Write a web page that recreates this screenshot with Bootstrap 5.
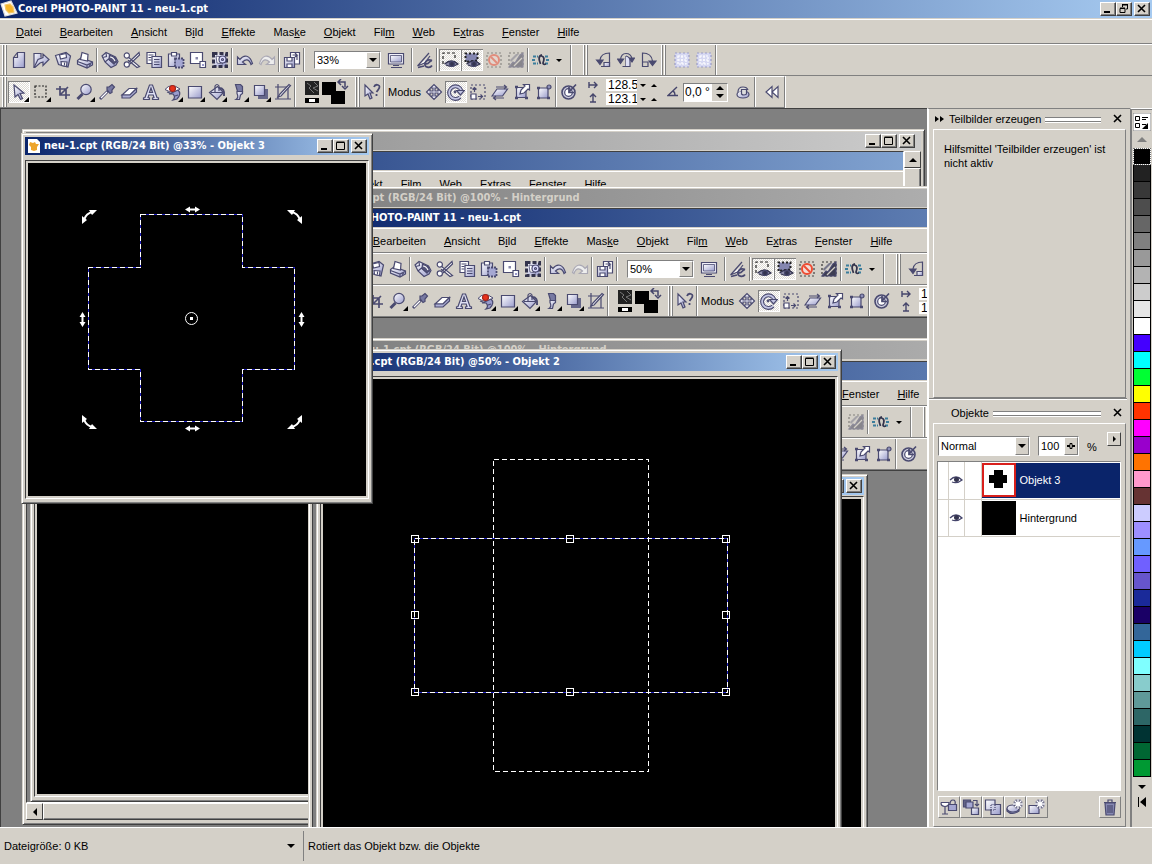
<!DOCTYPE html>
<html lang="de">
<head>
<meta charset="utf-8">
<meta name="viewport" content="width=device-width, initial-scale=1">
<title>Corel PHOTO-PAINT 11 - neu-1.cpt</title>
<link href="https://cdn.jsdelivr.net/npm/bootstrap@5.3.0/dist/css/bootstrap.min.css" rel="stylesheet">
<style>
:root{--face:#d4d0c8;--shade:#808080;--dark:#404040;--ink:#4a4a70;--lav:#b9bbdc}
body{font:11px/14px "Liberation Sans",Arial,sans-serif;color:#000;background:var(--face)}
button,input,select{font:inherit;color:#000;border-radius:0}
button{padding:0;border:0;background:none}
svg{display:block;flex:none}
.title-strip{height:18px;margin-bottom:1px;background:linear-gradient(90deg,#0a246a,#a6caf0);color:#fff;font:bold 11px/18px "DejaVu Sans Condensed","DejaVu Sans",sans-serif;white-space:nowrap}
.title-off{background:linear-gradient(90deg,#808080,#c0c0c0);color:#d4d0c8}
.title-far{background:linear-gradient(90deg,#808080,#cccccc)}
.cap-btn{width:16px;height:14px;background:var(--face);border:1px solid;border-color:#fff var(--dark) var(--dark) #fff;box-shadow:inset -1px -1px 0 var(--shade);display:grid;place-items:center}
.cap-btn:last-child{margin:0 2px}
.menu-row{height:25px;border-top:1px solid #fff;border-bottom:1px solid var(--shade);padding-left:7px}
.menu-row a{color:#000;text-decoration:none;padding:0 9px}
.tool-row{height:32px;border-top:1px solid #fff;border-bottom:1px solid var(--shade);white-space:nowrap}
.tool-row.short-row{width:785px;border-right:1px solid var(--shade);box-shadow:1px 0 0 #fff}
.grip{width:8px;height:100%;flex:none;background:linear-gradient(90deg,transparent 2px,#fff 2px 3px,var(--shade) 3px 4px,transparent 4px 5px,#fff 5px 6px,var(--shade) 6px 7px,transparent 7px)}
.tb{width:22px;height:22px;flex:none;display:grid;place-items:center;position:relative}
.tb.on{background:repeating-conic-gradient(#fff 0 25%,#dedbd5 0 50%) 0 0/2px 2px;box-shadow:inset 1px 1px 0 var(--shade),inset -1px -1px 0 #fff}
.tb.fly::after{content:"";position:absolute;right:1px;bottom:1px;border-bottom:5px solid #000;border-left:5px solid transparent}
.tb.faded{opacity:.5}.has-mask .tb.faded{opacity:1}
.rule{width:3px;height:24px;flex:none;border-left:1px solid var(--shade);box-shadow:inset 1px 0 0 #fff}
.rule.tall{height:30px}
.ic{width:18px;height:18px;fill:none;stroke:var(--ink);stroke-width:1.2}
.doc-ic{width:14px;height:16px;margin:0 3px 0 2px}
.field{border:1px solid;border-color:var(--shade) #fff #fff var(--shade);background:#fff}
.pick{appearance:none;background:#fff;border:0;padding:0 0 0 2px;flex:1;min-width:0;outline:0}
.drop{width:14px;background:var(--face);border:1px solid;border-color:#fff var(--shade) var(--shade) #fff;display:grid;place-items:center}
.down,.up,.leftw,.rightw{width:0;height:0;border:4px solid transparent}
.down{border-top-color:#000;border-bottom:0}.up{border-bottom-color:#000;border-top:0}
.leftw{border-right-color:#000;border-left:0}.rightw{border-left-color:#000;border-right:0}
.sm{border-width:3px}.down.sm{border-bottom:0}.up.sm{border-top:0}.rightw.sm{border-right:0}
.zoom-box{width:67px;height:18px}
.pos-stack{gap:2px}
.pos-box{width:53px;height:12px;background:#fff}
.pos-box input{width:31px;border:0;padding:0 0 0 2px;background:#fff;font-size:12px;line-height:12px;height:12px}
.spin{background:var(--face);flex:1;display:flex;align-items:center;justify-content:space-around}
.ang-box{width:45px;height:19px}
.ang-box input{width:28px;border:0;padding:0 1px;font-size:12px}
.modus{padding:0 2px}
.work{background:var(--shade);border-top:1px solid var(--dark);border-left:1px solid var(--dark);min-height:0;min-width:0}
.win{position:absolute;background:var(--face);border:1px solid;border-color:var(--face) var(--dark) var(--dark) var(--face);box-shadow:inset 1px 1px 0 #fff,inset -1px -1px 0 var(--shade);padding:2px 3px 4px;display:flex;flex-direction:column}
.view{flex:1;min-height:0;overflow:hidden;border:1px solid;border-color:var(--dark) #fff #fff var(--dark);background:var(--shade);position:relative}
.view.paper{background:#000;border-width:1px;padding:0;outline:1px solid var(--face);outline-offset:-3px;box-shadow:inset 0 0 0 2px var(--face)}
.view.paper>svg{margin:2px 0 0 2px}
.copy-shell{width:1152px;background:var(--face)}
.copy-shell .tool-row:last-child{box-shadow:0 1px 0 var(--dark)}
/* windows on the MDI desktop, in stacking order */
.w-far{left:21px;top:20px;right:2px;bottom:2px}
.w-mid{left:307px;top:77px;right:-260px;bottom:-20px}
.w-inner{left:22px;top:129px;right:-40px;bottom:-10px}
.w-inner>.view{margin-top:1px}
.w-fore{left:-10px;top:112px;width:538px;bottom:-10px}
.w-obj2{left:315px;top:240px;width:526px;bottom:-8px;padding-top:3px}
.w-obj3{left:20px;top:24px;width:352px;height:371px;padding-top:3px}
.w-nest{left:3px;top:110px;right:-400px;bottom:0}
.sbar-y{width:17px}
.sbtn{width:17px;height:17px;background:var(--face);border:1px solid;border-color:#fff var(--dark) var(--dark) #fff;display:grid;place-items:center}
.thumb{flex:1;background:var(--face);border:1px solid;border-color:#fff var(--dark) var(--dark) #fff;box-shadow:inset -1px -1px 0 var(--shade)}
.dock{width:203px;border-left:2px solid #fff;border-top:1px solid var(--shade);padding-right:3px;min-height:0}
.dock-head{height:20px;padding:0 4px 0 6px}
.dock-lines{flex:1;height:5px;border:1px solid var(--shade);border-left:0;border-right:0;background:#fff;box-shadow:0 1px 0 #fff}
.dock-body{margin:0 1px 0 4px;border:1px solid;border-color:#fff var(--shade) var(--shade) #fff;min-height:0}
.dock-a{height:290px;border-bottom:1px solid var(--shade);box-shadow:0 1px 0 #fff}
.hint{padding:12px 0 0 10px}
.layers{margin:5px 4px 5px 3px}
.layers td{height:37px;border-right:1px solid #d4d0c8;border-bottom:1px solid #d4d0c8;padding:0;vertical-align:middle}
.layers td:last-child{border-right:0}
.layers tr.sel .nm{background:#0a246a;color:#fff;box-shadow:inset 0 -1px 0 #fff,inset 0 1px 0 #fff}
.thumbpic{width:34px;height:34px}
.raised{width:22px;height:22px;border:1px solid;border-color:#fff var(--shade) var(--shade) #fff;display:grid;place-items:center}
.pal{width:22px;border-top:1px solid #fff;border-left:1px solid var(--shade);box-shadow:inset 1px 1px 0 var(--shade)}
.pal-up{margin:6px 0}
.chip{width:18px;height:17px;border:1px solid #000;border-top:0}
.chip.cur{border:1px solid #fff;outline:1px dotted #777;outline-offset:-1px}
.foot{height:37px;border-top:1px solid #fff}
.foot-l{width:304px;border-right:1px solid var(--shade);height:30px}
</style>
</head>
<body class="vh-100 d-flex flex-column overflow-hidden">
<svg width="0" height="0" class="position-absolute" aria-hidden="true">
<defs><linearGradient id="g" x1="0" y1="0" x2="1" y2="1"><stop offset="0" stop-color="#fff"/><stop offset="1" stop-color="#9a9ccc"/></linearGradient></defs>
<symbol id="new" viewBox="0 0 18 18"><path d="M3.500 6.500 7.500 1.500H14.500V16.500H3.500ZM3.500 6.500H7.500V1.500" fill="url(#g)"/></symbol>
<symbol id="open" viewBox="0 0 18 18"><path d="M2 16V2.500l7 0 0 4" fill="url(#g)"/><path d="M2 16.500 6 8.500l5-2V3l6 5.500-6 6v-3.500L8 12 3 16.500Z" fill="url(#g)"/></symbol>
<symbol id="save" viewBox="0 0 18 18"><path d="M1.500 4.500 12 1.500 16.500 5 14 16 4.500 13.500Z" fill="url(#g)"/><path d="M5.500 4 12 2.500 12.500 6.500 6.500 8ZM7 10.500l6 .5-.5 4.500-5-1Z" fill="#fff"/><path d="M10.500 11.500v3"/></symbol>
<symbol id="print" viewBox="0 0 18 18"><path d="M1.500 9.500 5 7l11.500 4v3L11 17 1.500 13Z" fill="url(#g)"/><path d="M4.500 8.500 6 1.500 12 3.500 11.500 10Z" fill="#fff"/><path d="M1.500 10.500 11 14l5-2.500M11 14v3M13 14.500l2-1"/></symbol>
<symbol id="roll" viewBox="0 0 18 18"><path d="M1 5 5 1.500 14.500 6 17 10.500 15 14 10 16.500 4 11Z" fill="url(#g)"/><path d="M5 2 5.500 5.500 1.500 6.500M4 11 7.500 8l6 5.500"/><path d="M8.500 4l6 3 1 4-2.500 1.500-5-4Z" fill="#55557a"/><path d="M9 6q3 0 5 4" stroke="#fff"/></symbol>
<symbol id="cut" viewBox="0 0 18 18"><path d="M5 6 16.500 15.500 14 16.500 5 9M5 12 16 1.500 16.500 4 7 13" fill="#fff"/><circle cx="3.800" cy="4.500" r="2.600" fill="#fff"/><circle cx="3.800" cy="13.500" r="2.600" fill="#fff"/></symbol>
<symbol id="copy" viewBox="0 0 18 18"><path d="M2 1.500h8.500v11H2Z" fill="#fff"/><path d="M3.500 4h5M3.500 6.500h3M3.500 9h3"/><path d="M7 5.500h9.500V16.500H7Z" fill="url(#g)"/><path d="M9 8.500h5.500M9 11h5.500M9 13.500h5.500"/></symbol>
<symbol id="paste" viewBox="0 0 18 18"><path d="M1.500 3h11v12.500h-11Z" fill="url(#g)"/><path d="M4.500 1.500h5v3.500h-5Z" fill="#fff"/><path d="M8 7.500h8.500v9H8Z" fill="#a5a7d2" stroke-width="1.800" stroke-dasharray="2 1"/></symbol>
<symbol id="pnew" viewBox="0 0 18 18"><path d="M1.500 1.500h12v11h-12Z" fill="#fff"/><path d="M6.500 6h2.500v2.500H6.500Z" fill="#88a" stroke="none"/><path d="M11 10.500h5.500v6H11Z" fill="#fff"/><path d="M13 13h2v2h-2Z" fill="#99c" stroke="none"/></symbol>
<symbol id="cap" viewBox="0 0 18 18"><path d="M2.500 2.500h13v13h-13Z" fill="url(#g)" stroke="#33334c" stroke-dasharray="4 2" stroke-width="3"/><path d="M5 5l6 1-3 2 4 5-6-1Z" fill="#fff" stroke-width=".8"/><circle cx="11.500" cy="8.500" r="3.500" fill="#ddf"/><circle cx="11.500" cy="8.500" r="1"/></symbol>
<symbol id="undo" viewBox="0 0 18 18"><path d="M1.500 13.500V6l2.500 2.500C8 3 14 4 16.500 12.500l-1.500 1C13 7.500 9.500 8 6.500 11l3 2.500Z" fill="url(#g)"/></symbol>
<symbol id="redo" viewBox="0 0 18 18"><path d="M16.500 13.500V6l-2.500 2.500C10 3 4 4 1.500 12.500l1.500 1C5 7.500 8.500 8 11.500 11l-3 2.500Z" fill="#eee" stroke="#aaa8b4"/></symbol>
<symbol id="imp" viewBox="0 0 18 18"><path d="M7.500 1.500h9V13h-9Z" fill="#fff"/><path d="M1.500 6.500h10v10h-10Z" fill="url(#g)"/><path d="M4 7v3h5V7M4 16v-3h5v3" fill="#fff"/><path d="M9.500 4h4.500l-2-2m2 2-2 2M14 4v5"/></symbol>
<symbol id="mon" viewBox="0 0 18 18"><path d="M1.500 2.500h15v10.500h-15Z" fill="#f2f2fb"/><path d="M3.500 4.500h11v6.500h-11Z" fill="url(#g)" stroke-width=".8"/><path d="M6 14.500h6M4 16.500h11"/></symbol>
<symbol id="pen" viewBox="0 0 18 18"><path d="M1.500 15 13 2M1.500 15l7-3L14 5" fill="#fff"/><path d="M2 16.500 8 15M9 12.500c4 2 4-3 7-3-3-1-6-1-7 3s5 5 7 2" stroke-width="1.800"/></symbol>
<symbol id="eye1" viewBox="0 0 18 18"><path d="M2 13V2h12v7" stroke="#222" stroke-dasharray="3 2"/><path d="M3.500 13q7-6 13.500 0-6 4-12 1" fill="#8d8daa" stroke="#34344f"/><circle cx="11" cy="13" r="2.500" fill="#34344f"/></symbol>
<symbol id="eye2" viewBox="0 0 18 18"><path d="M2.500 11V2.500h12v7Z" fill="#8486b0" stroke="#222" stroke-dasharray="2 2" stroke-width="2"/><path d="M3.500 13q7-6 13.500 0-6 4-12 1" fill="#8d8daa" stroke="#34344f"/><circle cx="11" cy="13" r="2.500" fill="#34344f"/></symbol>
<symbol id="ban" viewBox="0 0 18 18"><path d="M2 2h14v14H2Z" stroke-dasharray="2 2" stroke="#444"/><circle cx="9" cy="9" r="5" fill="#f3dcd6" stroke="#ee4b32" stroke-width="2"/><path d="m6 6 6 6" stroke="#ee4b32" stroke-width="2"/></symbol>
<symbol id="inv" viewBox="0 0 18 18"><path d="M2 2h14v14H2Z" stroke-dasharray="2 2" stroke="#333"/><path d="M16 2v14H2L6 11l2 1 5-8Z" fill="#3d3d52"/><path d="M3 9 9 3h3L4 11Z" fill="#77778a" stroke="none"/><path d="M7 15 15 7" stroke="#d4d0c8"/></symbol>
<symbol id="snap" viewBox="0 0 18 18"><path d="M1 5.500h5M0 9h4M1 12.500h5M13 5.500h4M14 9h4M13 12.500h4" stroke="#3b7d9c" stroke-dasharray="3 1" stroke-width="1.800"/><path d="M10 4Q5 5 8.500 13M9.500 5q4 1 1.500 7 0 2 3 1" stroke="#33334c" stroke-width="1.800"/></symbol>
<symbol id="rotl" viewBox="0 0 18 18"><path d="M6 15.500h8.500V2Q6 2 5 9" /><path d="m1.500 9 3.500 4.500L8 9Z" fill="#4a4a70"/><path d="M9 11.500h5.500v4H9Z" fill="url(#g)"/></symbol>
<symbol id="rot2" viewBox="0 0 18 18"><path d="M3.500 9Q4 2.500 9 2.500T15 8M9 5v10.500H5.500"/><path d="m.5 8 3 4.500 3-4.500ZM12 7h5.500l-2.500 4Z" fill="#4a4a70"/><path d="M9 5q4 1 4 5v5.500H9" fill="#dfe0f4"/></symbol>
<symbol id="rotr" viewBox="0 0 18 18"><path d="M3.500 15.500V2q9 0 10 8M3.500 11h5.500v4.500H3.500Z" fill="none"/><path d="m10 10 3.500 4.500L17 10Z" fill="#4a4a70"/></symbol>
<symbol id="grp" viewBox="0 0 18 18"><path d="M2 2h14v14H2Z" fill="#d6d8f2" stroke="#9a9cc5" stroke-dasharray="2 2"/><path d="M5 9h8M9 5v8M5 5h8v8H5Z" stroke="#fff" stroke-dasharray="2 1"/></symbol>
<symbol id="sel" viewBox="0 0 18 18"><path d="M4 2 14 10 10 10.500 12.500 15.500 10.500 16.500 8 11.500 5 14Z" fill="url(#g)"/></symbol>
<symbol id="mask" viewBox="0 0 18 18"><path d="M3 3h11v11H3Z" stroke="#222" stroke-dasharray="2 1.500"/></symbol>
<symbol id="crop" viewBox="0 0 18 18"><path d="M2 6h10v10M6 3v9h10M6 12 14 4" stroke-width="1.700"/></symbol>
<symbol id="lens" viewBox="0 0 18 18"><path d="m6.500 11-5 5" stroke-width="3"/><circle cx="10" cy="6.500" r="5.200" fill="url(#g)"/></symbol>
<symbol id="drop" viewBox="0 0 18 18"><path d="M2 16 10 8" stroke-width="3"/><path d="M3 15 9 9" stroke="#fff"/><path d="m9 4 2 0 3-2.500 2.500 2.500-2.500 3 0 2.500-2 1-3-4Z" fill="#7779a2"/></symbol>
<symbol id="rub" viewBox="0 0 18 18"><path d="M2 12 9 5.500h7.500L10 12Z" fill="#fff"/><path d="M2 12h8l6.500-6.500V9L10 15H2Z" fill="#aeb0d6"/></symbol>
<symbol id="txt" viewBox="0 0 18 18"><path d="M1.500 16.500v-1.500l1.500-.5L7.500 2h3L15 14.500l1.500.5v1.500h-6V15l1.500-.5-.8-2.500H6.800L6 14.500l1.500.5v1.500ZM7.500 9.500h3L9 5Z" fill="#dfe0f4" fill-rule="evenodd"/></symbol>
<symbol id="red" viewBox="0 0 18 18"><path d="M1 6.500Q7-1 16 6q-6 6-15 .5" fill="#fff" stroke-width="1"/><path d="M5 11q5-2 9-4 4 4-1 9l-4 1q3-3 0-6Z" fill="#9a9ccc"/><path d="M6 10l-3-1m8 4 3-1"/><circle cx="8.500" cy="5.500" r="3" fill="#e8321c" stroke="#a3261b"/></symbol>
<symbol id="rect" viewBox="0 0 18 18"><path d="M2.500 3.500h13v11.500h-13Z" fill="url(#g)"/></symbol>
<symbol id="fill" viewBox="0 0 18 18"><path d="m1.500 9.500 8-6 6 6-6.500 7Z" fill="url(#g)"/><path d="M7 9V3q2-3 4 0v5M3 9.500h12"/><path d="M11 5q6 0 5 8" stroke-width="2"/></symbol>
<symbol id="brush" viewBox="0 0 18 18"><path d="M5.500 1.500h5l2 2v5h-5Z" fill="#7779a2"/><path d="M7 8.500h5.500v2l-2 1.500-1 4.500H6q3-2 1-6Z" fill="url(#g)"/></symbol>
<symbol id="shad" viewBox="0 0 18 18"><path d="M6 6h10v10H6Z" fill="#66678a" stroke="none"/><path d="M2.500 2.500h10v10h-10Z" fill="url(#g)"/></symbol>
<symbol id="slice" viewBox="0 0 18 18"><path d="M1 4h13M4 1v15h10V4M1 16h16" /><path d="m4 14 3-1 9.500-10.500-1.500-1L6 11Z" fill="#fff"/></symbol>
<symbol id="help" viewBox="0 0 18 18"><path d="m2 2 8 8H7l2 5-2 1-2-5-3 2Z" fill="url(#g)"/><path d="M11 4q1-3 4-2t0 5l-1.500 2M13.500 11v2" stroke-width="1.800"/></symbol>
<symbol id="move" viewBox="0 0 18 18"><path d="M8 10H5v2.500L1.500 9 5 5.500V8h3V5H5.500L9 1.500 12.500 5H10v3h3V5.500L16.500 9 13 12.500V10h-3v3h2.500L9 16.500 5.500 13H8Z" fill="#e8e8f6"/></symbol>
<symbol id="rot" viewBox="0 0 18 18"><path d="M13 14A6.300 6.300 0 1 1 14.500 8" stroke-width="4"/><path d="M13 14A6.300 6.300 0 1 1 14.500 8" stroke="#c4c6e4" stroke-width="1.800"/><path d="m9.500 7.500h8L13.500 12Z" fill="#c4c6e4"/><circle cx="8" cy="9" r=".8"/></symbol>
<symbol id="scale" viewBox="0 0 18 18"><path d="M2 2h14v14H2Z" stroke-dasharray="2 2"/><path d="M2 11h5v5H2Z" fill="#fff"/><path d="M5.500 9V4.500m-2 2 2-2 2 2M9 13.500h4.500m-2-2 2 2-2 2"/></symbol>
<symbol id="skew" viewBox="0 0 18 18"><path d="M1 13 6 6h10.500l-5 7Z" fill="url(#g)"/><path d="M5 4h10m-2-2 2.500 2L13 6M13 15H3m2-2-2.500 2L5 17"/></symbol>
<symbol id="dist" viewBox="0 0 18 18"><path d="M3.500 4.500h9.500v10H3.500Z" fill="url(#g)"/><path d="M2 15h3M12 15h3M2 4h3" stroke-width="2.400"/><path d="m7 11 1-4 4-4-1.500-1.500h6V7L15 6l-4 4Z" fill="#fff"/></symbol>
<symbol id="persp" viewBox="0 0 18 18"><path d="M3.500 5h9.500v10H3.500Z" fill="url(#g)"/><path d="M2 15h3M12 15h3M2 5h3" stroke-width="2.400"/><circle cx="14" cy="4" r="2" fill="#8d8fb8"/></symbol>
<symbol id="aim" viewBox="0 0 18 18"><circle cx="8.500" cy="9.500" r="6.500" fill="#ccd" stroke-width="1.600"/><circle cx="8.500" cy="9.500" r="3.800" fill="#fff"/><path d="M8.500 9.500 16 1.500M9 4v5.500h5" stroke-width="1.700"/></symbol>
<symbol id="bake" viewBox="0 0 18 18"><ellipse cx="9" cy="11.500" rx="6" ry="3.500" fill="url(#g)"/><path d="M4 9q0-5 5-5 4 0 5 3M7.500 6.500h5v4.500q-3 2-5 0Z" fill="#ddd"/></symbol>
<symbol id="rew" viewBox="0 0 18 18"><path d="M9 3.500v11L3 9ZM15 3.500v11L9 9Z" fill="#fff"/></symbol>
<symbol id="app" viewBox="0 0 18 18"><path d="M1 4 11 1l6 12-12 3Z" fill="#fff" stroke="#ddd"/><path d="m5 5 5-1 3 3 1 5-5 1-3-3Z" fill="#f5b52b" stroke="#f3c766"/></symbol>
<symbol id="doc" viewBox="0 0 14 16"><path d="M1 1h9l3 3v11H1Z" fill="#fff" stroke="none"/><path d="m3 4 3 1 2-1 1 2 3 0-2 3 0 3-3 1-3-1 0-3-2-2Z" fill="#eda52d" stroke="none"/></symbol>
<symbol id="bmin" viewBox="0 0 10 10"><path d="M1 8h6" stroke="#000" stroke-width="2"/></symbol>
<symbol id="bmax" viewBox="0 0 10 10"><path d="M.5 1.500h8v7h-8ZM.5 1h8" stroke="#000" fill="none"/></symbol>
<symbol id="bres" viewBox="0 0 10 10"><path d="M3.500 3V1h5v4H7M1 4.500h5v4H1ZM1 4h5M3 .5h6" stroke="#000" fill="none"/></symbol>
<symbol id="bx" viewBox="0 0 10 10"><path d="m1 1 7 7M8 1 1 8" stroke="#000" stroke-width="1.600"/></symbol>
<symbol id="eye" viewBox="0 0 14 10"><path d="M1 5q6-6 12 0-5 4-10 2" fill="#fff" stroke="#45456b" stroke-width="1.300"/><circle cx="7.500" cy="4.500" r="2.500" fill="#34344f"/></symbol>
<symbol id="lock" viewBox="0 0 18 18"><path d="M1 4.500h8q0 4-4 4t-4-4M5 9v6.500M2 16h6" fill="#fff"/><path d="M8.500 6.500h8v6h-8Z" fill="#a5a7d2"/><path d="M10 6.500q0-4.500 3-4.500t2 4.500"/></symbol>
<symbol id="comb" viewBox="0 0 18 18"><path d="M1.500 2h7v7h-7Z" fill="#66678a"/><path d="M4 4h7v6H4Z" fill="#a5a7d2"/><path d="M9.500 10h7v6.500h-7Z" fill="url(#g)"/><path d="M11 2.500h4V8m-2-2 2 2 2-2"/></symbol>
<symbol id="union" viewBox="0 0 18 18"><path d="M1.500 2h9.500v4.500h5.500v10H7v-4.500H1.500Z" fill="url(#g)"/><path d="M7 12V6.500h4v5.500Z" stroke-dasharray="1 1"/></symbol>
<symbol id="star" viewBox="0 0 18 18"><path d="M12 1v10M7 6h10M8.500 2.500l7 7M15.500 2.500l-7 7" stroke-width="2.600"/><path d="M12 1v10M7 6h10M8.500 2.500l7 7M15.500 2.500l-7 7" stroke="#fff" stroke-width="1.400"/></symbol>
<symbol id="lensn" viewBox="0 0 18 18"><path d="M1 10.500v2.500q5 5 12 0v-2.500" fill="#8486b0"/><ellipse cx="7" cy="10.500" rx="6" ry="3.500" fill="url(#g)"/><use href="#star" width="18" height="18"/></symbol>
<symbol id="objn" viewBox="0 0 18 18"><path d="M1 7.500h10v8H1Z" fill="url(#g)"/><use href="#star" width="18" height="18"/></symbol>
<symbol id="bin" viewBox="0 0 18 18"><path d="M4 5h10l-1 12H5Z" fill="#8688b2"/><path d="M3 4.500h12M7 4V2h4v2M7 7v8M9 7v8M11 7v8"/></symbol>
</svg>

<header id="shell">
  <div class="title-strip d-flex align-items-center">
    <svg class="ic ms-0 me-0"><use href="#app"/></svg><span class="flex-grow-1">Corel PHOTO-PAINT 11 - neu-1.cpt</span>
    <span class="d-flex me-0"><button class="cap-btn" aria-label="Minimieren"><svg width="10" height="10"><use href="#bmin"/></svg></button><button class="cap-btn" aria-label="Wiederherstellen"><svg width="10" height="10"><use href="#bres"/></svg></button><button class="cap-btn" aria-label="Schließen"><svg width="10" height="10"><use href="#bx"/></svg></button></span>
  </div>
  <nav class="menu-row d-flex align-items-center" aria-label="Menü">
    <a href="#"><u>D</u>atei</a><a href="#"><u>B</u>earbeiten</a><a href="#"><u>A</u>nsicht</a><a href="#">B<u>i</u>ld</a><a href="#"><u>E</u>ffekte</a><a href="#">Mas<u>k</u>e</a><a href="#"><u>O</u>bjekt</a><a href="#">Fil<u>m</u></a><a href="#"><u>W</u>eb</a><a href="#">E<u>x</u>tras</a><a href="#"><u>F</u>enster</a><a href="#"><u>H</u>ilfe</a>
  </nav>
  <div class="tool-row d-flex align-items-center">
    <span class="grip"></span>
    <button class="tb" aria-label="Neu"><svg class="ic"><use href="#new"/></svg></button>
    <button class="tb" aria-label="Öffnen"><svg class="ic"><use href="#open"/></svg></button>
    <button class="tb" aria-label="Speichern"><svg class="ic"><use href="#save"/></svg></button>
    <button class="tb" aria-label="Drucken"><svg class="ic"><use href="#print"/></svg></button>
    <span class="rule"></span>
    <button class="tb" aria-label="Rückgängig bis"><svg class="ic"><use href="#roll"/></svg></button>
    <button class="tb" aria-label="Ausschneiden"><svg class="ic"><use href="#cut"/></svg></button>
    <button class="tb" aria-label="Kopieren"><svg class="ic"><use href="#copy"/></svg></button>
    <button class="tb" aria-label="Einfügen"><svg class="ic"><use href="#paste"/></svg></button>
    <button class="tb" aria-label="Als neues Dokument"><svg class="ic"><use href="#pnew"/></svg></button>
    <button class="tb" aria-label="Aufnahme"><svg class="ic"><use href="#cap"/></svg></button>
    <span class="rule"></span>
    <button class="tb" aria-label="Rückgängig"><svg class="ic"><use href="#undo"/></svg></button>
    <button class="tb" aria-label="Wiederherstellen"><svg class="ic"><use href="#redo"/></svg></button>
    <span class="rule"></span>
    <button class="tb" aria-label="Importieren"><svg class="ic"><use href="#imp"/></svg></button>
    <span class="rule me-1"></span>
    <span class="field zoom-box d-flex ms-1"><select class="pick zoom-val" aria-label="Zoom"><option>33%</option></select><span class="drop"><i class="down"></i></span></span>
    <button class="tb ms-1" aria-label="Vollbild"><svg class="ic"><use href="#mon"/></svg></button>
    <span class="rule ms-1"></span>
    <button class="tb" aria-label="Maskenstift"><svg class="ic"><use href="#pen"/></svg></button>
    <span class="rule"></span>
    <button class="tb on" aria-label="Maske anzeigen"><svg class="ic"><use href="#eye1"/></svg></button>
    <button class="tb on" aria-label="Überlagerung"><svg class="ic"><use href="#eye2"/></svg></button>
    <button class="tb faded" aria-label="Maske entfernen"><svg class="ic"><use href="#ban"/></svg></button>
    <button class="tb faded" aria-label="Maske umkehren"><svg class="ic"><use href="#inv"/></svg></button>
    <span class="rule"></span>
    <button class="tb" aria-label="Ausrichten"><svg class="ic"><use href="#snap"/></svg></button>
    <button class="px-1" aria-label="Mehr"><i class="down sm d-block"></i></button>
    <span class="rule tall ms-1"></span>
    <span class="grip ms-2 me-1"></span>
    <button class="tb" aria-label="Links drehen"><svg class="ic"><use href="#rotl"/></svg></button>
    <button class="tb" aria-label="180° drehen"><svg class="ic"><use href="#rot2"/></svg></button>
    <button class="tb" aria-label="Rechts drehen"><svg class="ic"><use href="#rotr"/></svg></button>
    <span class="grip me-1"></span>
    <button class="tb" aria-label="Gruppieren"><svg class="ic"><use href="#grp"/></svg></button>
    <button class="tb" aria-label="Gruppierung aufheben"><svg class="ic"><use href="#grp"/></svg></button>
    <span class="rule tall"></span>
  </div>
  <div class="tool-row short-row d-flex align-items-center">
    <span class="grip"></span>
    <button class="tb on fly" aria-label="Objektauswahl"><svg class="ic"><use href="#sel"/></svg></button>
    <button class="tb fly" aria-label="Rechteckmaske"><svg class="ic"><use href="#mask"/></svg></button>
    <button class="tb" aria-label="Beschneiden"><svg class="ic"><use href="#crop"/></svg></button>
    <button class="tb fly" aria-label="Zoomwerkzeug"><svg class="ic"><use href="#lens"/></svg></button>
    <button class="tb" aria-label="Pipette"><svg class="ic"><use href="#drop"/></svg></button>
    <button class="tb" aria-label="Radierer"><svg class="ic"><use href="#rub"/></svg></button>
    <button class="tb" aria-label="Text"><svg class="ic"><use href="#txt"/></svg></button>
    <button class="tb fly" aria-label="Rote Augen"><svg class="ic"><use href="#red"/></svg></button>
    <button class="tb fly" aria-label="Rechteck"><svg class="ic"><use href="#rect"/></svg></button>
    <button class="tb fly" aria-label="Füllung"><svg class="ic"><use href="#fill"/></svg></button>
    <button class="tb fly" aria-label="Malen"><svg class="ic"><use href="#brush"/></svg></button>
    <button class="tb fly" aria-label="Schatten"><svg class="ic"><use href="#shad"/></svg></button>
    <button class="tb" aria-label="Segment"><svg class="ic"><use href="#slice"/></svg></button>
    <span class="rule tall me-2"></span>
    <svg width="44" height="26" viewBox="0 0 44 26"><path d="M0 2h14v14H0Z" fill="#222"/><path d="M2 4l4 3-2 2 5 5M9 3l4 4-5 2 5 3" stroke="#777" fill="none"/><path d="M0 19h14v5H0Z"/><path d="M4 20h6v3H4Z" fill="#fff"/><path d="M17 3h14v9h9v13H26V16h-9Z"/><path d="M34 3h6v5M36 0l-3 3 3 3M37 7l3 3 3-3" stroke="#45456b" stroke-width="1.500" fill="none"/></svg>
    <span class="grip ms-1 me-0"></span>
    <button class="tb" aria-label="Direkthilfe"><svg class="ic"><use href="#help"/></svg></button>
    <span class="rule tall"></span>
    <span class="modus">Modus</span>
    <button class="tb" aria-label="Verschieben"><svg class="ic"><use href="#move"/></svg></button>
    <button class="tb on" aria-label="Rotieren"><svg class="ic"><use href="#rot"/></svg></button>
    <button class="tb" aria-label="Skalieren"><svg class="ic"><use href="#scale"/></svg></button>
    <button class="tb" aria-label="Neigen"><svg class="ic"><use href="#skew"/></svg></button>
    <button class="tb" aria-label="Verzerren"><svg class="ic"><use href="#dist"/></svg></button>
    <button class="tb" aria-label="Perspektive"><svg class="ic"><use href="#persp"/></svg></button>
    <span class="rule tall"></span>
    <button class="tb" aria-label="Drehpunkt"><svg class="ic"><use href="#aim"/></svg></button>
    <svg class="ms-2 me-1" width="14" height="24" viewBox="0 0 14 24" fill="none" stroke="#45456b" stroke-width="1.400"><path d="M1 2v6M1 5h8M6 2l3 3-3 3M2 22h6M5 22v-8M2 17l3-3 3 3"/></svg>
    <span class="d-flex flex-column pos-stack">
      <span class="pos-box d-flex"><input value="128.55" aria-label="X-Position"><span class="spin"><i class="down sm"></i><i class="up sm"></i></span></span>
      <span class="pos-box d-flex"><input value="123.17" aria-label="Y-Position"><span class="spin"><i class="down sm"></i><i class="up sm"></i></span></span>
    </span>
    <svg class="ms-2 me-1" width="12" height="12" fill="none" stroke="#45456b" stroke-width="1.400"><path d="M10 1 1 9.500h10M6 5q2 1 2 4"/></svg>
    <span class="ang-box field d-flex"><input value="0,0 °" aria-label="Winkel"><span class="spin flex-column"><i class="up"></i><i class="down"></i></span></span>
    <button class="tb ms-1" aria-label="Anwenden"><svg class="ic"><use href="#bake"/></svg></button>
    <span class="rule tall me-1"></span>
    <button class="tb" aria-label="Zurück"><svg class="ic"><use href="#rew"/></svg></button>
  </div>
</header>

<main class="d-flex flex-grow-1" style="min-height:0">
  <section class="work flex-grow-1 position-relative overflow-hidden" aria-label="Arbeitsbereich">
    <div class="win w-far">
      <div class="title-strip title-far d-flex align-items-center"><span class="flex-grow-1"></span><span class="d-flex pe-1 caps"></span></div>
      <div class="d-flex flex-grow-1" style="min-height:0">
        <div class="view">
          <div class="copy-shell" data-copy="menu"></div>
          <div class="win w-nest"><div class="view paper"></div></div>
        </div>
        <div class="sbar-y d-flex flex-column"><button class="sbtn" aria-label="Nach oben"><i class="up"></i></button><span class="thumb"></span></div>
      </div>
      <div class="d-flex"><button class="sbtn" aria-label="Nach links"><i class="leftw"></i></button><span class="thumb"></span></div>
    </div>
    <div class="win w-mid">
      <div class="title-strip title-off d-flex align-items-center"><svg class="doc-ic"><use href="#doc"/></svg><span>neu-1.cpt (RGB/24 Bit) @100% - Hintergrund</span></div>
      <div class="view">
        <div class="copy-shell has-mask" data-copy="50%"></div>
        <div class="win w-inner">
          <div class="title-strip title-off d-flex align-items-center"><svg class="doc-ic"><use href="#doc"/></svg><span>neu-1.cpt (RGB/24 Bit) @100% - Hintergrund</span></div>
          <div class="view">
            <div class="copy-shell" data-copy></div>
            <div class="win w-fore">
              <div class="title-strip d-flex align-items-center"><span class="flex-grow-1"></span><span class="d-flex caps"></span></div>
              <div class="view paper"></div>
            </div>
          </div>
        </div>
      </div>
    </div>
    <div class="win w-obj2">
      <div class="title-strip d-flex align-items-center"><svg class="doc-ic"><use href="#doc"/></svg><span class="flex-grow-1">neu-1.cpt (RGB/24 Bit) @50% - Objekt 2</span><span class="d-flex caps"></span></div>
      <div class="view paper mt-1">
        <svg width="512" height="450" fill="none" stroke="#fff" shape-rendering="crispEdges">
          <path d="M170.500 80.500h155v312h-155Z" stroke-dasharray="5 3"/>
          <path d="M91.500 159.500h313v154h-313Z" stroke="#2020c0"/><path d="M91.500 159.500h313v154h-313Z" stroke-dasharray="5 3"/>
          <path d="M88.500 156.500h7v7h-7ZM243.500 156.500h7v7h-7ZM399.500 156.500h7v7h-7ZM88.500 232.500h7v7h-7ZM399.500 232.500h7v7h-7ZM88.500 309.500h7v7h-7ZM243.500 309.500h7v7h-7ZM399.500 309.500h7v7h-7Z"/>
        </svg>
      </div>
    </div>
    <div class="win w-obj3">
      <div class="title-strip d-flex align-items-center"><svg class="doc-ic"><use href="#doc"/></svg><span class="flex-grow-1">neu-1.cpt (RGB/24 Bit) @33% - Objekt 3</span><span class="d-flex caps"></span></div>
      <div class="view paper mt-1">
        <svg width="338" height="334" fill="none" stroke="#fff">
          <defs><path id="cross" d="M112.500 51.500h102v53h52v102h-52v52h-102v-52h-52v-102h52Z"/>
          <g id="arc"><path d="M54 61v-8l5 4ZM69 47l-8 0 3 5Z" fill="#fff" stroke="none"/><path d="M56 57q2-7 9-8" stroke-width="2"/></g>
          <path id="dbl" d="M0 0 5-3v2h5v-2l5 3-5 3V1H5v2Z" fill="#fff" stroke="none"/></defs>
          <use href="#cross" stroke="#2020c0" shape-rendering="crispEdges"/><use href="#cross" stroke-dasharray="5 3" shape-rendering="crispEdges"/>
          <circle cx="163.500" cy="155.500" r="6"/><path d="M162 154h3v3h-3Z" fill="#fff" stroke="none"/>
          <use href="#arc"/><use href="#arc" transform="matrix(-1 0 0 1 328 0)"/><use href="#arc" transform="matrix(1 0 0 -1 0 313)"/><use href="#arc" transform="matrix(-1 0 0 -1 328 313)"/>
          <use href="#dbl" x="157" y="46.500"/><use href="#dbl" x="157" y="265.500"/>
          <use href="#dbl" transform="translate(54.500 149)rotate(90)"/><use href="#dbl" transform="translate(273.500 149)rotate(90)"/>
        </svg>
      </div>
    </div>
  </section>

  <aside class="dock d-flex flex-column flex-shrink-0">
    <section class="dock-a d-flex flex-column">
      <div class="dock-head d-flex align-items-center gap-1"><svg width="10" height="8"><path d="M0 1v6l4-3ZM5 1v6l4-3Z"/></svg><span>Teilbilder erzeugen</span><span class="dock-lines"></span><button class="ms-2" aria-label="Teilbilder schließen"><svg width="10" height="10"><use href="#bx"/></svg></button></div>
      <div class="dock-body flex-grow-1"><p class="m-0 hint">Hilfsmittel 'Teilbilder erzeugen' ist<br>nicht aktiv</p></div>
    </section>
    <section class="d-flex flex-column flex-grow-1" style="min-height:0">
      <div class="dock-head d-flex align-items-center gap-1 mt-1"><span class="ps-3">Objekte</span><span class="dock-lines"></span><button class="ms-2" aria-label="Objekte schließen"><svg width="10" height="10"><use href="#bx"/></svg></button></div>
      <div class="dock-body flex-grow-1 d-flex flex-column">
        <div class="d-flex ps-1 pe-1 pt-2">
          <span class="field d-flex mt-1" style="width:92px;height:20px"><select class="pick" aria-label="Modus der Überlagerung"><option>Normal</option></select><span class="drop"><i class="down"></i></span></span>
          <span class="field d-flex mt-1 ms-2" style="width:41px;height:20px"><input class="pick" value="100" aria-label="Deckkraft"><span class="drop"><svg width="10" height="10" fill="none" stroke="#000"><path d="M1 4.500h3v-2h2v2h3M1 5.500h3v2h2v-2h3"/></svg></span></span>
          <span class="ms-2 mt-2 flex-grow-1">%</span>
          <button class="sbtn" style="width:14px;height:14px" aria-label="Optionen"><i class="rightw sm"></i></button>
        </div>
        <div class="layers field flex-grow-1">
          <table class="w-100" aria-label="Objekte">
            <colgroup><col style="width:10px"><col style="width:16px"><col style="width:17px"><col></colgroup>
            <tr class="sel"><td></td><td><svg width="14" height="10"><use href="#eye"/></svg></td><td></td><td class="nm"><span class="d-flex align-items-center gap-1"><svg class="thumbpic" viewBox="0 0 34 34"><path d="M1 1h32v32H1Z" fill="#fff" stroke="#d8201c" stroke-width="2"/><path d="M12 7h9v5h4v8h-4v5h-9v-5H7v-8h5Z"/></svg>Objekt 3</span></td></tr>
            <tr><td></td><td><svg width="14" height="10"><use href="#eye"/></svg></td><td></td><td class="nm"><span class="d-flex align-items-center gap-1"><svg class="thumbpic" viewBox="0 0 34 34"><path d="M0 0h34v34H0Z"/></svg>Hintergrund</span></td></tr>
          </table>
        </div>
        <div class="d-flex ps-1 pe-1 pb-2">
          <button class="raised" aria-label="Sperren"><svg class="ic"><use href="#lock"/></svg></button><button class="raised" aria-label="Kombinieren"><svg class="ic"><use href="#comb"/></svg></button><button class="raised" aria-label="Vereinigen"><svg class="ic"><use href="#union"/></svg></button><button class="raised" aria-label="Neue Linse"><svg class="ic"><use href="#lensn"/></svg></button><button class="raised me-auto" aria-label="Neues Objekt"><svg class="ic"><use href="#objn"/></svg></button><button class="raised" aria-label="Löschen"><svg class="ic"><use href="#bin"/></svg></button>
        </div>
      </div>
    </section>
  </aside>
  <aside class="pal d-flex flex-column align-items-center flex-shrink-0" aria-label="Farbpalette">
    <svg class="mt-1" width="18" height="18" fill="none" stroke="#000"><path d="M0 0h18v18H0Z" fill="#fff" stroke="#888"/><path d="M2.500 3.500h4v4h-4ZM2.500 10.500h4v4h-4ZM9 4.500h6M9 6.500h4M9 11.500h4"/><path d="M15 10v6H9Z" fill="#000" stroke="none"/></svg>
    <svg class="pal-up" width="10" height="5"><path d="M0 5h10L5 0Z" fill="#808080"/></svg>
    <div id="chips"></div>
    <button class="mt-2" aria-label="Weitere Farben"><i class="down d-block"></i></button>
    <button class="mt-2" aria-label="Palette öffnen"><svg width="10" height="10"><path d="M1 0h1v10H1ZM9 0v10L3 5Z"/></svg></button>
  </aside>
</main>
<footer class="foot d-flex align-items-center">
  <span class="foot-l d-flex align-items-center ps-1 pe-2"><span class="flex-grow-1">Dateigröße: 0 KB</span><i class="down"></i></span>
  <span class="ps-1">Rotiert das Objekt bzw. die Objekte</span>
</footer>

<script src="https://cdn.jsdelivr.net/npm/bootstrap@5.3.0/dist/js/bootstrap.bundle.min.js"></script>
<script>
// colour chips of the palette column
const colours = ['#000','#222','#383838','#4d4d4d','#666','#808080','#999','#b3b3b3','#ccc','#e6e6e6','#fff','#40f','#0ff','#0f3','#ff0','#f30','#f0f','#90c','#ff7300','#f9c','#663333','#ccf','#9d8fff','#6699ff','#7060ff','#6655cc','#1a2a99','#1a0066','#369','#0cf','#7fffff','#8cc','#5f9999','#2d6666','#033','#063','#093'];
document.getElementById('chips').innerHTML = colours.map((c, i) => `<div class="chip${i ? '' : ' cur'}" style="background:${c}"></div>`).join('');
// caption buttons of the document windows
document.querySelectorAll('.caps').forEach(el => {
  el.innerHTML = [['bmin','Minimieren'],['bmax','Maximieren'],['bx','Schließen']].map(([n, t]) =>
    `<button class="cap-btn" aria-label="${t}"><svg width="10" height="10"><use href="#${n}"/></svg></button>`).join('');
});
// screen copies opened as documents repeat the program's own bars
const shell = document.getElementById('shell');
document.querySelectorAll('[data-copy]').forEach(el => {
  const part = el.dataset.copy;
  el.inert = true;
  el.innerHTML = shell.innerHTML;
  if (part === 'menu') el.querySelectorAll('.tool-row').forEach(row => row.remove());
  else if (part) el.querySelector('.zoom-val option').textContent = part;
});
</script>
</body>
</html>
